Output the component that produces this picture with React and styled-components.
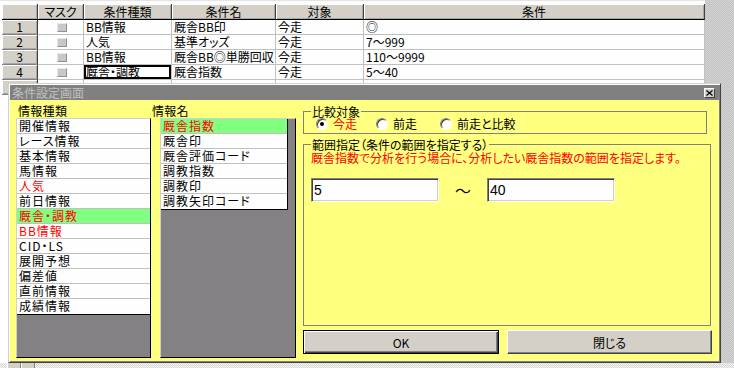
import React from 'react'
import styled, { createGlobalStyle } from 'styled-components'

const colors = {
    face: '#d4d0c8', shadow: '#808080', dark: '#404040', light: '#ffffff',
    yellow: '#ffff80', green: '#80ff80', red: '#ff0000', grid: '#c0c0c0', title: '#808080'
}

const GlobalStyle = createGlobalStyle`
  html, body { margin: 0; padding: 0; }
  body {
    font-family: "Noto Sans CJK JP", "Noto Sans", sans-serif;
    font-size: 12px;
    color: #000;
    font-feature-settings: "palt";
  }
`

const dither = `repeating-conic-gradient(#c4c4c4 0 25%, #d2d2d2 0 50%) 0 0 / 2px 2px`

const Screen = styled.div`
  width: 734px;
  height: 368px;
  position: relative;
  overflow: hidden;
  display: flex;
  flex-direction: column;
  background: ${dither};
`

const Main = styled.div`
  flex: 1;
  display: flex;
`

const Sheet = styled.div`
  width: 705px;
  padding: 3px 0 0 2px;
  box-sizing: border-box;
  background: #fff;
  border-top: 1px solid #e4e4e4;
`

const GrayArea = styled.div`
  flex: 1;
`

const Row = styled.div`
  display: grid;
  grid-template-columns: 36px 46px 88px 104px 88px 341px;
  height: ${p => p.$h}px;
`

const HeadCell = styled.div`
  background: ${colors.face};
  border-right: 1px solid ${colors.dark};
  border-bottom: 1px solid #000;
  box-shadow: inset 1px 1px 0 #fff, inset -1px -1px 0 #a8a8a8;
  text-align: center;
  line-height: 15px;
  box-sizing: border-box;
`

const RowHead = styled(HeadCell)`
  border-bottom: 1px solid ${colors.shadow};
  line-height: 14px;
`

const Cell = styled.div`
  background: #fdfefd;
  border-right: 1px solid ${colors.grid};
  border-bottom: 1px solid ${colors.grid};
  padding-left: 2px;
  box-sizing: border-box;
  line-height: 14px;
  white-space: nowrap;
  ${p => p.$clip && 'overflow: hidden;'}
  display: flex;
  align-items: center;
  justify-content: ${p => (p.$center ? 'center' : 'flex-start')};
  ${p => p.$selected && 'box-shadow: inset 0 0 0 2px #000;'}
`

const MaskBox = styled.div`
  width: 10px;
  height: 9px;
  box-sizing: border-box;
  background: #c8c8c8;
  border: 1px solid;
  border-color: #e8e8e8 #909090 #909090 #e8e8e8;
`

const BottomBar = styled.div`
  height: 5px;
  display: flex;
  padding-left: 7px;
  background: repeating-conic-gradient(#d8d8d8 0 25%, #f4f4f4 0 50%) 0 0 / 2px 2px;
`

const TabButton = styled.div`
  width: 14px;
  background: ${colors.face};
  border-left: 1px solid #fff;
  border-right: 1px solid ${colors.shadow};
  box-sizing: border-box;
`

const Dialog = styled.div`
  position: absolute;
  left: 8px;
  top: 83px;
  width: 713px;
  height: 280px;
  box-sizing: border-box;
  padding: 1px;
  background: ${colors.face};
  border: 1px solid;
  border-color: ${colors.face} ${colors.dark} ${colors.dark} ${colors.face};
  box-shadow: inset 1px 1px 0 #fff, inset -1px -1px 0 ${colors.shadow};
  display: flex;
  flex-direction: column;
`

const TitleBar = styled.div`
  height: 15px;
  flex: none;
  background: ${colors.title};
  color: #c0c0c0;
  display: flex;
  align-items: center;
  justify-content: space-between;
  padding: 0 4px 0 2px;
  line-height: 15px;
`

const CloseButton = styled.div`
  width: 11px;
  height: 10px;
  box-sizing: border-box;
  background: ${colors.face};
  border: 1px solid;
  border-color: #fff ${colors.dark} ${colors.dark} #fff;
  display: flex;
  align-items: center;
  justify-content: center;
`

const Body = styled.div`
  flex: 1;
  background: ${colors.yellow};
  display: flex;
  padding: 1px 7px 3px 6px;
  min-height: 0;
`

const Column = styled.div`
  width: ${p => p.$w}px;
  margin-left: ${p => p.$ml || 0}px;
  display: flex;
  flex-direction: column;
`

const Label = styled.div`
  height: 17px;
  padding-top: 2px;
  box-sizing: border-box;
  line-height: 15px;
  letter-spacing: 0.3px;
  margin-left: ${p => p.$shift || 0}px;
  white-space: nowrap;
`

const ListBox = styled.div`
  flex: 1;
  background: #838183;
  border: 1px solid;
  border-color: #d0d0d0 #000 #000 #d0d0d0;
`

const ItemStack = styled.div`
  width: ${p => (p.$w ? `${p.$w}px` : 'auto')};
  background: #fdfefd;
  border-right: ${p => (p.$w ? '1px solid #000' : 'none')};
  border-bottom: 1px solid #000;
  box-sizing: border-box;
`

const Item = styled.div`
  height: 15px;
  box-sizing: border-box;
  border-bottom: 1px solid ${colors.grid};
  padding-left: 2px;
  line-height: 14px;
  letter-spacing: 1px;
  white-space: nowrap;
  background: ${p => (p.$active ? colors.green : 'transparent')};
  color: ${p => (p.$red ? colors.red : '#000')};
  &:last-child { border-bottom: none; }
`

const RightPanel = styled.div`
  width: 409px;
  margin-left: 7px;
  padding: 4px 0 4px;
  box-sizing: border-box;
  display: flex;
  flex-direction: column;
`

const Group = styled.fieldset`
  margin: ${p => (p.$first ? 0 : '4px 0 0')};
  padding: 0 7px 3px;
  width: ${p => p.$w}px;
  box-sizing: border-box;
  border: 1px solid ${colors.shadow};
  ${p => p.$grow && 'flex: 1;'}
  min-width: 0;
`

const Legend = styled.legend`
  padding: 0 1px;
  line-height: 13px;
  white-space: nowrap;
`

const RadioRow = styled.div`
  display: flex;
  align-items: center;
  height: 12px;
  padding-left: 5px;
`

const RadioItem = styled.div`
  width: ${p => p.$w}px;
  display: flex;
  align-items: center;
  flex: none;
`

const RadioCircle = styled.span`
  width: 12px;
  height: 12px;
  box-sizing: border-box;
  border-radius: 50%;
  background: #fff;
  border: 1px solid;
  border-color: ${colors.shadow} #fff #fff ${colors.shadow};
  box-shadow: inset 1px 1px 0 ${colors.dark};
  display: flex;
  align-items: center;
  justify-content: center;
  &::after {
    content: '';
    width: 4px;
    height: 4px;
    border-radius: 50%;
    background: ${p => (p.$on ? '#000' : 'transparent')};
  }
`

const RadioText = styled.span`
  margin-left: 5px;
  line-height: 12px;
  color: ${p => (p.$on ? colors.red : '#000')};
  white-space: nowrap;
`

const Notice = styled.div`
  color: ${colors.red};
  line-height: 13px;
  white-space: nowrap;
`

const RangeRow = styled.div`
  display: flex;
  align-items: center;
  margin-top: 14px;
`

const NumBox = styled.input`
  width: 128px;
  height: 24px;
  box-sizing: border-box;
  margin: 0;
  padding: 0 2px;
  border: 1px solid;
  border-color: ${colors.shadow} #fff #fff ${colors.shadow};
  box-shadow: inset 1px 1px 0 ${colors.dark}, inset -1px -1px 0 ${colors.face};
  background: #fdfefd;
  font-family: "Liberation Sans", sans-serif;
  font-size: 14px;
  color: #000;
  outline: none;
`

const Tilde = styled.div`
  width: 48px;
  text-align: center;
  font-size: 16px;
  line-height: 20px;
`

const ButtonRow = styled.div`
  display: flex;
  gap: 8px;
  margin-top: 4px;
  height: 24px;
`

const Button = styled.div`
  width: ${p => p.$w}px;
  box-sizing: border-box;
  background: ${colors.face};
  display: flex;
  align-items: center;
  justify-content: center;
  border: 1px solid;
  border-color: ${p => (p.$primary ? '#000' : `#fff ${colors.dark} ${colors.dark} #fff`)};
  box-shadow: ${p => (p.$primary
        ? `inset 1px 1px 0 #fff, inset -1px -1px 0 ${colors.dark}, inset -2px -2px 0 ${colors.shadow}`
        : `inset -1px -1px 0 ${colors.shadow}`)};
`

const gridRows = [
    ['1', 'BB情報', '厩舎BB印', '今走', '◎'],
    ['2', '人気', '基準オッズ', '今走', '7～999'],
    ['3', 'BB情報', '厩舎BB◎単勝回収', '今走', '110～9999'],
    ['4', '厩舎・調教', '厩舎指数', '今走', '5～40'],
    ['', '', '', '', ''],
]

const kinds = [
    { t: '開催情報' }, { t: 'レース情報' }, { t: '基本情報' }, { t: '馬情報' },
    { t: '人気', red: true }, { t: '前日情報' }, { t: '厩舎・調教', red: true, active: true },
    { t: 'BB情報', red: true }, { t: 'CID・LS' }, { t: '展開予想' }, { t: '偏差値' },
    { t: '直前情報' }, { t: '成績情報' },
]

const names = [
    { t: '厩舎指数', red: true, active: true }, { t: '厩舎印' }, { t: '厩舎評価コード' },
    { t: '調教指数' }, { t: '調教印' }, { t: '調教矢印コード' },
]

const CloseIcon = () => (
    <svg width="7" height="6" viewBox="0 0 7 6">
        <path d="M0.5 0.5 L6.5 5.5 M6.5 0.5 L0.5 5.5" stroke="#000" strokeWidth="1.2" fill="none" />
    </svg>
)

function Radio({ w, on, children }) {
    return (
        <RadioItem $w={w}>
            <RadioCircle $on={on} />
            <RadioText $on={on}>{children}</RadioText>
        </RadioItem>
    )
}

function App() {
    return (
        <Screen>
            <GlobalStyle />
            <Main>
                <Sheet>
                    <Row $h={16}>
                        <HeadCell />
                        <HeadCell>マスク</HeadCell>
                        <HeadCell>条件種類</HeadCell>
                        <HeadCell>条件名</HeadCell>
                        <HeadCell>対象</HeadCell>
                        <HeadCell>条件</HeadCell>
                    </Row>
                    {gridRows.map((r, i) => (
                        <Row $h={15} key={i}>
                            <RowHead>{r[0]}</RowHead>
                            <Cell $center><MaskBox /></Cell>
                            <Cell $selected={i === 3}>{r[1]}</Cell>
                            <Cell $clip={i === 2}>{r[2]}</Cell>
                            <Cell>{r[3]}</Cell>
                            <Cell>{r[4]}</Cell>
                        </Row>
                    ))}
                </Sheet>
                <GrayArea />
            </Main>
            <BottomBar>
                <TabButton />
                <TabButton />
            </BottomBar>

            <Dialog>
                <TitleBar>
                    <span>条件設定画面</span>
                    <CloseButton><CloseIcon /></CloseButton>
                </TitleBar>
                <Body>
                    <Column $w={135}>
                        <Label $shift={2}>情報種類</Label>
                        <ListBox>
                            <ItemStack>
                                {kinds.map(k => (
                                    <Item key={k.t} $red={k.red} $active={k.active}>{k.t}</Item>
                                ))}
                            </ItemStack>
                        </ListBox>
                    </Column>
                    <Column $w={136} $ml={9}>
                        <Label $shift={-8}>情報名</Label>
                        <ListBox>
                            <ItemStack $w={127}>
                                {names.map(k => (
                                    <Item key={k.t} $red={k.red} $active={k.active}>{k.t}</Item>
                                ))}
                            </ItemStack>
                        </ListBox>
                    </Column>
                    <RightPanel>
                        <Group $first $w={404}>
                            <Legend>比較対象</Legend>
                            <RadioRow>
                                <Radio w={60} on>今走</Radio>
                                <Radio w={64}>前走</Radio>
                                <Radio w={100}>前走と比較</Radio>
                            </RadioRow>
                        </Group>
                        <Group $w={408} $grow>
                            <Legend>範囲指定（条件の範囲を指定する）</Legend>
                            <Notice>厩舎指数で分析を行う場合に、分析したい厩舎指数の範囲を指定します。</Notice>
                            <RangeRow>
                                <NumBox value="5" readOnly />
                                <Tilde>～</Tilde>
                                <NumBox value="40" readOnly />
                            </RangeRow>
                        </Group>
                        <ButtonRow>
                            <Button $w={196} $primary>OK</Button>
                            <Button $w={205}>閉じる</Button>
                        </ButtonRow>
                    </RightPanel>
                </Body>
            </Dialog>
        </Screen>
    )
}

export default App
